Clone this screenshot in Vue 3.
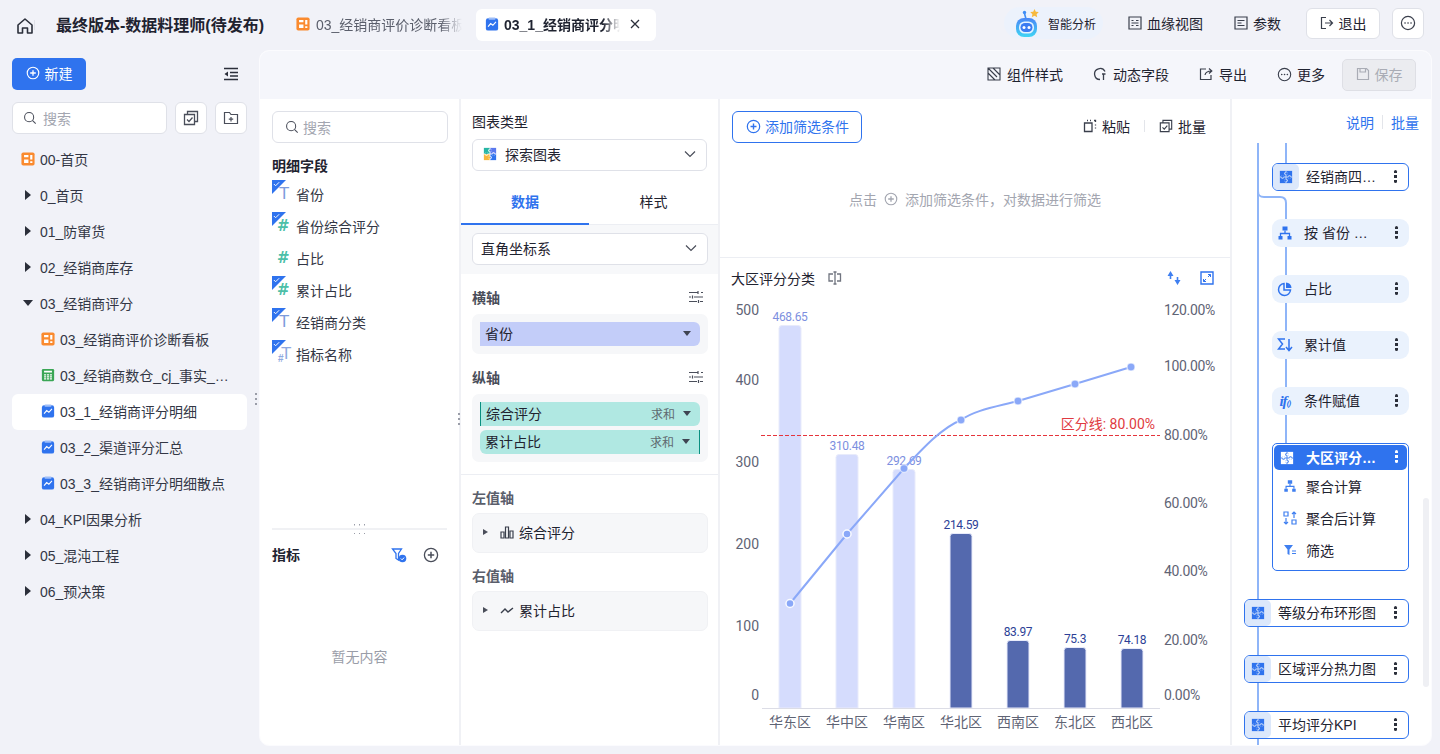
<template>
  <svg class="sprite" aria-hidden="true">
    <defs>
      <linearGradient id="robotGrad" x1="0" y1="0" x2="0" y2="1">
        <stop offset="0" stop-color="#4a86f6" />
        <stop offset="1" stop-color="#3fd5f4" />
      </linearGradient>
      <mask id="puzzleMask">
        <rect width="16" height="16" fill="#fff" />
        <path d="M8 1v14M1 8h14" stroke="#000" stroke-width="0.900" />
        <circle cx="8" cy="4" r="2" fill="#000" />
        <circle cx="12" cy="8" r="2" fill="#000" />
        <circle cx="8" cy="12" r="2" fill="#000" />
        <circle cx="4" cy="8" r="2" fill="#000" />
        <circle cx="8.700" cy="4" r="1.500" fill="#fff" />
        <circle cx="12" cy="8.700" r="1.500" fill="#fff" />
        <circle cx="7.300" cy="12" r="1.500" fill="#fff" />
        <circle cx="4" cy="7.300" r="1.500" fill="#fff" />
      </mask>
    </defs>
    <symbol id="puzzle" viewBox="0 0 16 16">
      <rect x="1" y="1" width="14" height="14" fill="currentColor" mask="url(#puzzleMask)" />
    </symbol>
    <symbol id="puzzleColor" viewBox="0 0 16 16">
      <g mask="url(#puzzleMask)">
        <rect x="1" y="1" width="7" height="7" fill="#26b5a4" />
        <rect x="8" y="1" width="7" height="7" fill="#5a78ee" />
        <rect x="1" y="8" width="7" height="7" fill="#f6b73c" />
        <rect x="8" y="8" width="7" height="7" fill="#2f73ee" />
      </g>
    </symbol>
    <symbol id="dash" viewBox="0 0 16 16">
      <rect x="0.500" y="0.500" width="15" height="15" rx="2" fill="#fa8a2e" />
      <path d="M3.500 3.500h5v2.500h-5z M10.500 3.500h2.500v5h-2.500z M3.500 8.500h5v4h-5z M10.500 10.500h2.500v2h-2.500z" fill="#fff" />
    </symbol>
    <symbol id="report" viewBox="0 0 16 16">
      <rect x="1" y="1.500" width="14" height="14" rx="2.500" fill="#2f73ee" />
      <rect x="4" y="0.500" width="8" height="2.500" rx="1" fill="#9dbdf8" />
      <path d="M3.500 11 6.500 7.500l2.500 2 3.500-4" fill="none" stroke="#fff" stroke-width="1.300" />
    </symbol>
    <symbol id="sheet" viewBox="0 0 16 16">
      <rect x="1" y="1" width="14" height="14" rx="1.500" fill="#3aa655" />
      <path d="M3.500 3h9v2.200h-9z M3.500 7h2.400v1.600H3.500z M6.800 7h2.400v1.600H6.800z M10.100 7h2.400v1.600h-2.400z M3.500 9.500h2.400v1.300H3.500z M6.800 9.500h2.400v1.300H6.800z M10.100 9.500h2.400v1.300h-2.400z M3.500 11.700h2.400v1.300H3.500z M6.800 11.700h2.400v1.300H6.800z M10.100 11.700h2.400v1.300h-2.400z" fill="#fff" />
    </symbol>
    <symbol id="agg" viewBox="0 0 16 16">
      <path d="M5.500 1.500h5v4h-5z M1.500 11h4v3.500h-4z M10.500 11h4v3.500h-4z" fill="currentColor" />
      <path d="M8 5.500V8.500M3.500 11V8.500h9V11" fill="none" stroke="currentColor" stroke-width="1.300" />
    </symbol>
    <symbol id="more" viewBox="0 0 16 16">
      <circle cx="8" cy="8" r="6.600" fill="none" stroke="currentColor" stroke-width="1.200" />
      <path d="M5 8h.1M8 8h.1M11 8h.1" stroke="currentColor" stroke-width="1.600" stroke-linecap="round" />
    </symbol>
    <symbol id="plus" viewBox="0 0 16 16">
      <circle cx="8" cy="8" r="6.600" fill="none" stroke="currentColor" stroke-width="1.300" />
      <path d="M8 4.800v6.400M4.800 8h6.400" stroke="currentColor" stroke-width="1.500" />
    </symbol>
    <symbol id="tune" viewBox="0 0 16 16">
      <path d="M1 3.500h9M13 3.500h2M1 8h2M6 8h9M1 12.500h8M12 12.500h3M10 2v3M4.500 6.500v3M10.500 11v3" fill="none" stroke="currentColor" stroke-width="1.200" />
    </symbol>
    <symbol id="search" viewBox="0 0 16 16">
      <circle cx="7" cy="7" r="5.200" fill="none" stroke="currentColor" stroke-width="1.200" />
      <path d="m11 11 3.500 3.500" stroke="currentColor" stroke-width="1.200" />
    </symbol>
    <symbol id="batch" viewBox="0 0 16 16">
      <path d="M1.500 4.500h10v10h-10z M4.500 4.500v-3h10v10h-3" fill="none" stroke="currentColor" stroke-width="1.300" />
      <path d="m4 9.500 2 2 3.500-4" fill="none" stroke="currentColor" stroke-width="1.300" />
    </symbol>
    <symbol id="chev" viewBox="0 0 12 12">
      <path d="m1 3.500 5 5 5-5" fill="none" stroke="currentColor" stroke-width="1.200" />
    </symbol>
  </svg>

  <div class="page">
    <header class="topbar">
      <svg class="home" viewBox="0 0 18 18"><path d="M2 8 9 2l7 6v8h-4.500v-5h-5v5H2z" fill="none" stroke="#2b2f3a" stroke-width="1.600" stroke-linejoin="round" /></svg>
      <i class="top-sep"></i>
      <h1 class="doc-title">最终版本-数据料理师(待发布)</h1>
      <div class="tab">
        <svg class="ic14"><use href="#dash" /></svg>
        <span class="tab-text">03_经销商评价诊断看板</span>
      </div>
      <div class="tab active">
        <svg class="ic14"><use href="#report" /></svg>
        <span class="tab-text">03_1_经销商评分明细</span>
        <svg class="tab-close" viewBox="0 0 10 10"><path d="m1 1 8 8M9 1 1 9" stroke="#2b2f3a" stroke-width="1.300" /></svg>
      </div>
      <div class="top-right">
        <div class="ai-pill">
          <svg class="robot" viewBox="0 0 28 28">
            <path d="M12 10 10.500 4.500" stroke="#3f8df5" stroke-width="1.600" />
            <circle cx="10.500" cy="3.500" r="1.700" fill="#3f8df5" />
            <path d="m20.500 0 1.300 2.700 3 .4-2.200 2.100.6 3-2.700-1.500-2.700 1.500.6-3-2.200-2.100 3-.4z" fill="#f7b93e" />
            <rect x="2" y="9" width="21" height="19" rx="8" fill="url(#robotGrad)" />
            <rect x="5" y="12.500" width="15" height="12" rx="5.500" fill="#e4f3ff" />
            <rect x="6.500" y="14" width="12" height="9" rx="4.500" fill="#3a7cf2" />
            <circle cx="10" cy="18.500" r="1.500" fill="#fff" />
            <circle cx="15" cy="18.500" r="1.500" fill="#fff" />
          </svg>
          <span>智能分析</span>
        </div>
        <div class="top-link lineage">
          <svg class="ic14" viewBox="0 0 14 14"><path d="M1 1h12v12H1z M3.500 4.500h2M3.500 9.500h2M8 4.500h2.500M8 9.500h2.500M3.500 7h7" fill="none" stroke="#3a3f4c" stroke-width="1.200" /></svg>
          <span>血缘视图</span>
        </div>
        <div class="top-link param">
          <svg class="ic14" viewBox="0 0 14 14"><path d="M1 1h12v12H1z M3.500 4.500h7M3.500 7h4M3.500 9.500h7" fill="none" stroke="#3a3f4c" stroke-width="1.200" /></svg>
          <span>参数</span>
        </div>
        <button class="exit-btn">
          <svg class="ic14" viewBox="0 0 14 14"><path d="M6 1.500H1.500v11H6 M5 7h7.500M9.500 4l3 3-3 3" fill="none" stroke="#3a3f4c" stroke-width="1.200" /></svg>
          退出
        </button>
        <button class="more-btn"><svg class="ic16 dark"><use href="#more" /></svg></button>
      </div>
    </header>

    <div class="body">
      <aside class="sidebar">
        <div class="side-top">
          <button class="new-btn"><svg class="ic14"><use href="#plus" /></svg>新建</button>
          <svg class="collapse" viewBox="0 0 16 14"><path d="M1 1.500h14M7 5.500h8M7 9h8M1 12.500h14" stroke="#2b2f3a" stroke-width="1.500" /><path d="M5 4.500 1.500 7 5 9.500z" fill="#2b2f3a" /></svg>
        </div>
        <div class="side-search">
          <div class="search-box"><svg class="ic14"><use href="#search" /></svg>搜索</div>
          <button class="square-btn"><svg class="ic16"><use href="#batch" /></svg></button>
          <button class="square-btn">
            <svg class="ic16" viewBox="0 0 16 16"><path d="M1.500 2.500h5l1.500 2h6.500v9h-13z M8 7v4.500M5.800 9.200h4.400" fill="none" stroke="currentColor" stroke-width="1.200" /></svg>
          </button>
        </div>
        <ul class="tree">
          <li v-for="row in treeRows" :key="row.label" class="tree-row" :class="{ child: row.child, current: row.current }">
            <i v-if="row.arrow" class="arrow" :class="row.arrow"></i>
            <svg v-if="row.icon" class="ic14 tree-ic"><use :href="'#' + row.icon" /></svg>
            <span class="tree-label">{{ row.label }}</span>
          </li>
        </ul>
        <span class="grip side-grip"></span>
      </aside>

      <main class="card">
        <div class="toolbar">
          <div class="tool">
            <svg class="ic14" viewBox="0 0 14 14"><path d="M1 1h12v12H1z M1 1l9 9M6 1l7 7M1 6l7 7" fill="none" stroke="#3a3f4c" stroke-width="1.100" /></svg>
            <span>组件样式</span>
          </div>
          <div class="tool">
            <svg class="ic14" viewBox="0 0 14 14"><path d="M12 4.500A5.500 5.500 0 1 0 7 12.500 M9 7h3.500M10.500 7v6" fill="none" stroke="#3a3f4c" stroke-width="1.300" /></svg>
            <span>动态字段</span>
          </div>
          <div class="tool">
            <svg class="ic14" viewBox="0 0 14 14"><path d="M7 2H1.500v10.500h10.500V8 M6 8c.5-3 3-4 6.500-4M10 1.500 12.800 4 10 6.500" fill="none" stroke="#3a3f4c" stroke-width="1.200" /></svg>
            <span>导出</span>
          </div>
          <div class="tool more-tool">
            <svg class="ic15 dark"><use href="#more" /></svg>
            <span>更多</span>
          </div>
          <button class="save-btn">
            <svg class="ic14" viewBox="0 0 14 14"><path d="M1.500 1.500h9l2 2v9h-11z M4 1.500v3.500h5.500v-3.500" fill="none" stroke="#a9acb5" stroke-width="1.200" /></svg>
            保存
          </button>
        </div>

        <div class="panels">
          <section class="fields">
            <div class="search-box wide"><svg class="ic14"><use href="#search" /></svg>搜索</div>
            <div class="group-title">明细字段</div>
            <ul class="field-list">
              <li v-for="f in fieldRows" :key="f.label" class="field-row">
                <span class="field-ic">
                  <i v-if="f.checked" class="corner"></i>
                  <svg v-if="f.checked" class="tick" viewBox="0 0 8 6"><path d="m1 3 2 2 4-4" fill="none" stroke="#fff" stroke-width="1.100" /></svg>
                  <span class="glyph" :class="f.type">{{ f.type === 'num' ? '#' : 'T' }}</span>
                  <span v-if="f.type === 'mix'" class="glyph-small">#</span>
                </span>
                <span class="field-name">{{ f.label }}</span>
              </li>
            </ul>
            <div class="measure">
              <div class="measure-line"><span class="h-grip"></span></div>
              <div class="measure-head">
                <span class="group-title flat">指标</span>
                <svg class="ic16 m-filter" viewBox="0 0 16 16">
                  <path d="M1.500 2h9L7.500 6.500V13L5 11.500v-5z" fill="none" stroke="#2f73ee" stroke-width="1.300" />
                  <circle cx="11.500" cy="11.500" r="3.800" fill="#2f73ee" />
                  <path d="m9.800 11.500 1.300 1.300 2-2.200" fill="none" stroke="#fff" stroke-width="1" />
                </svg>
                <svg class="ic16 m-plus"><use href="#plus" /></svg>
              </div>
              <div class="empty">暂无内容</div>
            </div>
          </section>

          <section class="config">
            <div class="cfg-label first">图表类型</div>
            <div class="select type-select">
              <svg class="ic14"><use href="#puzzleColor" /></svg>
              <span>探索图表</span>
              <svg class="chev"><use href="#chev" /></svg>
            </div>
            <div class="cfg-tabs">
              <span class="cfg-tab on">数据</span>
              <span class="cfg-tab">样式</span>
            </div>
            <div class="coord-band">
              <div class="select coord-select">
                <span>直角坐标系</span>
                <svg class="chev"><use href="#chev" /></svg>
              </div>
            </div>
            <div class="axis-head"><span>横轴</span><svg class="ic16"><use href="#tune" /></svg></div>
            <div class="well">
              <div class="pill dim"><span>省份</span><i class="caret"></i></div>
            </div>
            <div class="axis-head"><span>纵轴</span><svg class="ic16"><use href="#tune" /></svg></div>
            <div class="well stack">
              <div class="pill val left-edge"><span>综合评分</span><em>求和</em><i class="caret"></i></div>
              <div class="pill val right-edge"><span>累计占比</span><em>求和</em><i class="caret"></i></div>
            </div>
            <div class="cfg-rule"></div>
            <div class="value-title">左值轴</div>
            <div class="value-box">
              <i class="mini-arrow"></i>
              <svg class="ic14" viewBox="0 0 14 14"><path d="M1 7h3v6H1z M5.500 2h3v11h-3z M10 6h3v7h-3z" fill="none" stroke="#3a3f4c" stroke-width="1.200" /></svg>
              <span>综合评分</span>
            </div>
            <div class="value-title second">右值轴</div>
            <div class="value-box">
              <i class="mini-arrow"></i>
              <svg class="ic14" viewBox="0 0 14 14"><path d="m1 10 4-4 3 3 5-4" fill="none" stroke="#3a3f4c" stroke-width="1.400" /></svg>
              <span>累计占比</span>
            </div>
            <span class="grip cfg-grip"></span>
          </section>

          <section class="chart-col">
            <div class="filter-area">
              <div class="filter-head">
                <button class="add-filter"><svg class="ic15"><use href="#plus" /></svg>添加筛选条件</button>
                <div class="filter-actions">
                  <span class="fa-item">
                    <svg class="ic14" viewBox="0 0 14 14"><path d="M1.500 4h7.500v8.500H1.500z M4 1.500h1M7 1.500h1M11 1.500h1.500V3M12.500 5.500v1M12.500 8.500v1" fill="none" stroke="#3a3f4c" stroke-width="1.300" /></svg>
                    粘贴
                  </span>
                  <i class="fa-sep"></i>
                  <span class="fa-item"><svg class="ic14"><use href="#batch" /></svg>批量</span>
                </div>
              </div>
              <div class="filter-hint">
                点击
                <svg class="ic14"><use href="#plus" /></svg>
                添加筛选条件，对数据进行筛选
              </div>
            </div>
            <div class="chart-head">
              <span>大区评分分类</span>
              <svg class="ic14 rename" viewBox="0 0 14 14"><path d="M5 3H1v7h4M9 3h3.500v7H9 M7 1v12M5.500 1h3M5.500 13h3" fill="none" stroke="#70747f" stroke-width="1.300" /></svg>
              <svg class="ic16 swap" viewBox="0 0 16 16"><path d="M4.500 1 1.500 6h2.200v3h1.600V6h2.200zM11.500 15l3-5h-2.200V7h-1.600v3H8.500z" fill="#3f7ff0" /></svg>
              <svg class="ic14 expand" viewBox="0 0 14 14"><path d="M1 1h12v12H1z" fill="none" stroke="#2f73ee" stroke-width="1.400" /><path d="M8 3.500h2.500V6M10.500 3.500 8 6M6 10.500H3.500V8M3.500 10.500 6 8" fill="none" stroke="#2f73ee" stroke-width="1" /></svg>
            </div>
            <svg class="chart" viewBox="720 290 511 456">
              <g v-for="t in leftTicks" :key="t.label">
                <text class="tick-text" x="759" :y="t.y + 5" text-anchor="end">{{ t.label }}</text>
              </g>
              <g v-for="t in rightTicks" :key="t.label">
                <text class="tick-text pct" x="1164" :y="t.y + 5">{{ t.label }}</text>
              </g>
              <g v-for="b in bars" :key="b.name">
                <path :d="barPath(b)" :fill="b.light ? '#d5dcfd' : '#5469ae'" stroke="#e8ebfb" stroke-width="1" />
                <text class="bar-value" :class="{ light: b.light }" :x="b.x" :y="b.top - 5" text-anchor="middle">{{ b.value }}</text>
                <text class="tick-text" :x="b.x" y="727" text-anchor="middle">{{ b.name }}</text>
              </g>
              <path d="M762 708.500h398" stroke="#dcdde6" stroke-width="1" />
              <path d="M761 435.500h399" stroke="#e5343c" stroke-width="1" stroke-dasharray="4 2" />
              <text class="cut-label" x="1155" y="429" text-anchor="end">区分线: 80.00%</text>
              <path :d="linePath" fill="none" stroke="#8aa8f8" stroke-width="2" />
              <circle v-for="(p, i) in linePoints" :key="i" :cx="p[0]" :cy="p[1]" r="4" fill="#8aa8f8" stroke="#fff" :stroke-opacity="i < 2 ? 0.9 : 0.6" stroke-width="1.500" />
            </svg>
          </section>

          <section class="flow-col">
            <div class="flow-head">
              <span>说明</span><i></i><span>批量</span>
            </div>
            <div class="flow">
              <svg class="flow-lines" viewBox="0 0 200 603">
                <path d="M26 0V603" fill="none" stroke="#8fb5f8" stroke-width="2" />
                <path d="M54 0V24M26 48c0 5 2 6 6 6h16c4 0 6 2 6 6V320" fill="none" stroke="#8fb5f8" stroke-width="2" />
              </svg>
              <div class="node outlined inner">
                <span class="node-ic boxed"><svg class="ic14"><use href="#puzzle" /></svg></span>
                <span class="node-text">经销商四…</span>
                <i class="dots"></i>
              </div>
              <div v-for="s in steps" :key="s.label" class="node soft inner">
                <span class="node-ic">
                  <svg v-if="s.icon === 'agg'" class="ic16"><use href="#agg" /></svg>
                  <svg v-else-if="s.icon === 'pie'" class="ic16" viewBox="0 0 16 16"><path d="M7 2.500a6 6 0 1 0 6.500 6.500H7z" fill="none" stroke="currentColor" stroke-width="1.500" /><path d="M9 1.500A5.500 5.500 0 0 1 14.500 7H9z" fill="currentColor" /></svg>
                  <svg v-else-if="s.icon === 'sum'" class="ic16" viewBox="0 0 16 16"><path d="M8 2H1.500l4 5-4 5H8M12 2v11M9 10l3 3.500 3-3.500" fill="none" stroke="currentColor" stroke-width="1.500" /></svg>
                  <em v-else class="if-mark">if<small>()</small></em>
                </span>
                <span class="node-text">{{ s.label }}</span>
                <i class="dots"></i>
              </div>
              <div class="node-group">
                <div class="node-current">
                  <span class="node-ic"><svg class="ic14"><use href="#puzzle" /></svg></span>
                  <span class="node-text">大区评分…</span>
                  <i class="dots"></i>
                </div>
                <div class="sub-row">
                  <svg class="ic14"><use href="#agg" /></svg>聚合计算
                </div>
                <div class="sub-row">
                  <svg class="ic14" viewBox="0 0 14 14"><path d="M1 1h4v4H1z M9 9h4v4H9z M3 7v6M1 11l2 2 2-2M11 7V1M9 3l2-2 2 2" fill="none" stroke="currentColor" stroke-width="1.200" /></svg>聚合后计算
                </div>
                <div class="sub-row">
                  <svg class="ic14" viewBox="0 0 14 14"><path d="M1 2h9L6.500 6.500V12L4.500 11V6.500z" fill="currentColor" /><path d="M9 8h4M9 10.500h4" stroke="currentColor" stroke-width="1.100" /></svg>筛选
                </div>
              </div>
              <div v-for="(t, i) in charts" :key="t" class="node outlined outer" :class="{ tight: i === 0 }">
                <span class="node-ic boxed"><svg class="ic14"><use href="#puzzle" /></svg></span>
                <span class="node-text">{{ t }}</span>
                <i class="dots"></i>
              </div>
              <span class="flow-scroll"></span>
            </div>
          </section>
        </div>
      </main>
    </div>
  </div>
</template>

<script setup>
import { computed } from 'vue'

const treeRows = [
  { label: '00-首页', icon: 'dash' },
  { label: '0_首页', arrow: 'right' },
  { label: '01_防窜货', arrow: 'right' },
  { label: '02_经销商库存', arrow: 'right' },
  { label: '03_经销商评分', arrow: 'down' },
  { label: '03_经销商评价诊断看板', icon: 'dash', child: true },
  { label: '03_经销商数仓_cj_事实_…', icon: 'sheet', child: true },
  { label: '03_1_经销商评分明细', icon: 'report', child: true, current: true },
  { label: '03_2_渠道评分汇总', icon: 'report', child: true },
  { label: '03_3_经销商评分明细散点', icon: 'report', child: true },
  { label: '04_KPI因果分析', arrow: 'right' },
  { label: '05_混沌工程', arrow: 'right' },
  { label: '06_预决策', arrow: 'right' }
]

const fieldRows = [
  { label: '省份', type: 'text', checked: true },
  { label: '省份综合评分', type: 'num', checked: true },
  { label: '占比', type: 'num', checked: false },
  { label: '累计占比', type: 'num', checked: true },
  { label: '经销商分类', type: 'text', checked: true },
  { label: '指标名称', type: 'mix', checked: true }
]

const steps = [
  { label: '按 省份 …', icon: 'agg' },
  { label: '占比', icon: 'pie' },
  { label: '累计值', icon: 'sum' },
  { label: '条件赋值', icon: 'if' }
]

const charts = ['等级分布环形图', '区域评分热力图', '平均评分KPI']

const leftTicks = [
  { label: '500', y: 310 },
  { label: '400', y: 380 },
  { label: '300', y: 462 },
  { label: '200', y: 544 },
  { label: '100', y: 626 },
  { label: '0', y: 695 }
]

const rightTicks = [
  { label: '120.00%', y: 310 },
  { label: '100.00%', y: 366 },
  { label: '80.00%', y: 435 },
  { label: '60.00%', y: 503 },
  { label: '40.00%', y: 571 },
  { label: '20.00%', y: 640 },
  { label: '0.00%', y: 695 }
]

const bars = [
  { name: '华东区', value: '468.65', x: 790, top: 325.5, light: true },
  { name: '华中区', value: '310.48', x: 847, top: 454.5, light: true },
  { name: '华南区', value: '292.69', x: 904, top: 469.5, light: true },
  { name: '华北区', value: '214.59', x: 961, top: 533.5, light: false },
  { name: '西南区', value: '83.97', x: 1018, top: 640.5, light: false },
  { name: '东北区', value: '75.3', x: 1075, top: 647.5, light: false },
  { name: '西北区', value: '74.18', x: 1132, top: 648.5, light: false }
]

const barPath = (b) => {
  const l = b.x - 11
  const r = b.x + 11
  return `M${l} 708V${b.top + 3}q0-3 3-3H${r - 3}q3 0 3 3V708z`
}

const linePoints = [
  [790, 603.5],
  [847, 534],
  [904, 468.5],
  [961, 420],
  [1018, 401],
  [1075, 384],
  [1131, 367]
]

const linePath = computed(() => {
  const [a, b, c, d, e, f, g] = linePoints
  return `M${a}L${b}L${c}C925 446 942 428 ${d}C975 410 995 407 ${e}L${f}L${g}`
})
</script>

<style>
html,
body {
  margin: 0;
  background: #f1f2f8;
}
</style>

<style scoped>
* {
  box-sizing: border-box;
}

.sprite {
  position: absolute;
  width: 0;
  height: 0;
}

.page {
  width: 1440px;
  height: 754px;
  overflow: hidden;
  background: #f1f2f8;
  color: #1f2330;
  font-family: "Liberation Sans", "Noto Sans CJK SC", sans-serif;
  font-size: 14px;
}

button {
  font-family: inherit;
  font-size: 14px;
  cursor: pointer;
}

ul {
  list-style: none;
  margin: 0;
  padding: 0;
}

.ic14 {
  width: 14px;
  height: 14px;
  flex: none;
}

.ic15 {
  width: 15px;
  height: 15px;
  flex: none;
}

.ic16 {
  width: 16px;
  height: 16px;
  flex: none;
}

.dark {
  color: #3a3f4c;
}

/* top bar */
.topbar {
  height: 50px;
  display: flex;
  align-items: center;
  padding-left: 16px;
  position: relative;
}

.home {
  width: 18px;
  height: 18px;
  margin-top: 2px;
}

.top-sep {
  width: 1px;
  height: 10px;
  margin: 0 21px 0 0;
  background: #dfe1e8;
}

.doc-title {
  margin: 0 32px 2px 0;
  font-size: 16px;
  font-weight: 600;
  width: 208px;
  white-space: nowrap;
}

.tab {
  display: flex;
  align-items: center;
  gap: 6px;
  width: 180px;
  height: 32px;
  padding-bottom: 2px;
  color: #5a5e6b;
  white-space: nowrap;
}

.tab-text {
  width: 146px;
  overflow: hidden;
  -webkit-mask-image: linear-gradient(90deg, #000 85%, transparent);
  mask-image: linear-gradient(90deg, #000 85%, transparent);
}

.tab.active {
  gap: 5px;
  background: #fff;
  border-radius: 6px;
  padding-left: 9px;
  color: #1f2330;
  font-weight: 600;
}

.tab.active .tab-text {
  width: 116px;
}

.tab-close {
  width: 10px;
  height: 10px;
  margin-left: 5px;
}

.top-right {
  position: absolute;
  right: 16px;
  top: 7px;
  display: flex;
  align-items: center;
  height: 32px;
}

.ai-pill {
  display: flex;
  align-items: center;
  gap: 6px;
  width: 99px;
  height: 32px;
  padding-left: 10px;
  border-radius: 16px;
  background: #ecf2fc;
  font-size: 12px;
}

.robot {
  width: 28px;
  height: 28px;
}

.top-link {
  display: flex;
  align-items: center;
  gap: 5px;
}

.lineage {
  margin-left: 25px;
}

.param {
  margin-left: 31px;
}

.exit-btn {
  display: flex;
  align-items: center;
  justify-content: center;
  gap: 5px;
  width: 74px;
  height: 31px;
  margin-left: 25px;
  background: #fff;
  border: 1px solid #dfe1e8;
  border-radius: 6px;
  color: #1f2330;
}

.more-btn {
  display: flex;
  align-items: center;
  justify-content: center;
  width: 32px;
  height: 31px;
  margin-left: 12px;
  padding: 0;
  background: #fff;
  border: 1px solid #dfe1e8;
  border-radius: 6px;
}

.body {
  display: flex;
  height: 696px;
}

/* left tree */
.sidebar {
  width: 259px;
  flex: none;
  padding: 8px 12px 0;
  position: relative;
}

.side-top {
  display: flex;
  align-items: center;
  justify-content: space-between;
  height: 32px;
}

.new-btn {
  display: flex;
  align-items: center;
  justify-content: center;
  gap: 5px;
  width: 74px;
  height: 32px;
  padding: 0 0 2px;
  background: #2f73ee;
  color: #fff;
  border: none;
  border-radius: 5px;
}

.collapse {
  width: 16px;
  height: 14px;
  margin-right: 8px;
}

.side-search {
  display: flex;
  gap: 8px;
  margin-top: 12px;
}

.search-box {
  display: flex;
  align-items: center;
  gap: 6px;
  width: 155px;
  height: 32px;
  padding-left: 10px;
  background: #fff;
  border: 1px solid #dfe1e8;
  border-radius: 6px;
  color: #a3a6b0;
}

.search-box svg {
  color: #4a4e5a;
}

.search-box.wide {
  width: 176px;
  padding-left: 12px;
  gap: 4px;
}

.square-btn {
  display: flex;
  align-items: center;
  justify-content: center;
  width: 32px;
  height: 32px;
  padding: 0;
  background: #fff;
  border: 1px solid #dfe1e8;
  border-radius: 6px;
  color: #4a4e5a;
}

.tree {
  margin-top: 8px;
}

.tree-row {
  display: flex;
  align-items: center;
  height: 36px;
  padding: 0 0 2px 9px;
  white-space: nowrap;
  color: #333745;
  border-radius: 6px;
}

.tree-row.child {
  padding-left: 29px;
}

.tree-row.current {
  background: #fff;
}

.tree-ic {
  margin-right: 5px;
}

.arrow {
  width: 0;
  height: 0;
  border-style: solid;
}

.arrow.right {
  margin-left: 4px;
  margin-right: 9px;
  border-width: 5px 0 5px 6px;
  border-color: transparent transparent transparent #2b2f3a;
}

.arrow.down {
  margin-left: 2px;
  margin-right: 7px;
  border-width: 6px 5px 0;
  border-color: #2b2f3a transparent transparent;
}

.grip {
  position: absolute;
  width: 2px;
  height: 14px;
  background: repeating-linear-gradient(#9a9da8 0 2px, transparent 2px 5px);
}

.side-grip {
  left: 255px;
  top: 343px;
}

/* card */
.card {
  width: 1173px;
  height: 696px;
  flex: none;
  background: #fff;
  border: 1px solid #fbfbfe;
  border-radius: 10px;
  overflow: hidden;
  display: flex;
  flex-direction: column;
}

.toolbar {
  height: 48px;
  flex: none;
  display: flex;
  align-items: center;
  justify-content: flex-end;
  gap: 30px;
  padding-right: 15px;
  background: #f5f6fb;
}

.tool {
  display: flex;
  align-items: center;
  gap: 6px;
  padding-bottom: 2px;
  color: #1f2330;
}

.more-tool {
  gap: 5px;
}

.save-btn {
  display: flex;
  align-items: center;
  justify-content: center;
  gap: 5px;
  width: 74px;
  height: 32px;
  margin-left: -13px;
  padding: 0 0 2px;
  background: #ebecf0;
  border: 1px solid #dedfe5;
  border-radius: 5px;
  color: #a9acb5;
}

.panels {
  flex: 1;
  display: flex;
  min-height: 0;
}

/* field column */
.fields {
  width: 201px;
  flex: none;
  padding: 12px 12px 0;
  border-right: 2px solid #f0f1f5;
  display: flex;
  flex-direction: column;
}

.group-title {
  margin-top: 13px;
  line-height: 20px;
  font-weight: 600;
}

.group-title.flat {
  margin: 0;
  flex: 1;
}

.field-list {
  margin-top: 2px;
}

.field-row {
  display: flex;
  align-items: center;
  height: 32px;
  gap: 6px;
  color: #333745;
}

.field-ic {
  position: relative;
  width: 18px;
  height: 32px;
  flex: none;
}

.corner {
  position: absolute;
  left: 0;
  top: 2px;
  width: 14px;
  height: 14px;
  background: #2f73ee;
  clip-path: polygon(0 0, 100% 0, 0 100%);
}

.tick {
  position: absolute;
  left: 1px;
  top: 3px;
  width: 7px;
  height: 6px;
}

.glyph {
  position: absolute;
  left: 7px;
  top: 6px;
  font-size: 17px;
  line-height: 20px;
}

.glyph.text {
  color: #7d9bdc;
}

.glyph.num {
  left: 5px;
  font-family: "DejaVu Sans", sans-serif;
  font-size: 15px;
  color: #4dbfa8;
  font-weight: 700;
}

.glyph.mix {
  left: 9px;
  color: #8fa9e0;
}

.glyph-small {
  position: absolute;
  left: 6px;
  top: 15px;
  font-size: 10px;
  line-height: 12px;
  font-weight: 700;
  color: #8fa9e0;
}

.measure {
  margin-top: 158px;
  flex: 1;
  display: flex;
  flex-direction: column;
}

.measure-line {
  position: relative;
  height: 2px;
  background: #f0f1f4;
}

.h-grip {
  position: absolute;
  left: 82px;
  top: -4px;
  width: 14px;
  height: 10px;
  background:
    repeating-linear-gradient(90deg, #9a9da8 0 1.500px, transparent 1.500px 5px) top / 100% 1.500px no-repeat,
    repeating-linear-gradient(90deg, #9a9da8 0 1.500px, transparent 1.500px 5px) bottom / 100% 1.500px no-repeat;
}

.measure-head {
  display: flex;
  align-items: center;
  gap: 16px;
  height: 20px;
  margin-top: 15px;
  padding-right: 8px;
}

.m-plus {
  color: #4a4e5a;
}

.empty {
  margin-top: 82px;
  text-align: center;
  color: #9a9da8;
  line-height: 20px;
}

/* config column */
.config {
  width: 259px;
  flex: none;
  border-right: 2px solid #f0f1f5;
  position: relative;
}

.cfg-label.first {
  margin: 13px 11px 7px;
  line-height: 20px;
}

.select {
  display: flex;
  align-items: center;
  height: 32px;
  padding-bottom: 2px;
  background: #fff;
  border: 1px solid #dfe1e8;
  border-radius: 6px;
}

.type-select {
  margin: 0 11px;
  padding: 0 10px 2px;
  gap: 8px;
}

.chev {
  width: 12px;
  height: 12px;
  margin-left: auto;
  color: #4a4e5a;
}

.cfg-tabs {
  display: flex;
  height: 39px;
  margin-top: 15px;
}

.cfg-tab {
  flex: 1;
  text-align: center;
  line-height: 32px;
  border-bottom: 1px solid #eceef3;
}

.cfg-tab.on {
  flex: none;
  width: 128px;
  color: #2f73ee;
  font-weight: 600;
  border-bottom: 2px solid #2f73ee;
}

.coord-band {
  height: 49px;
  padding: 8px 10px 0 11px;
  background: #f7f8fa;
}

.coord-select {
  padding: 0 10px 2px 8px;
}

.axis-head {
  display: flex;
  align-items: center;
  justify-content: space-between;
  height: 20px;
  padding-bottom: 2px;
  margin: 14px 14px 6px 11px;
  color: #4a4e5a;
  font-weight: 600;
}

.axis-head svg {
  color: #4a4e5a;
}

.well {
  margin: 0 10px 0 11px;
  padding: 8px;
  background: #f6f7f9;
  border-radius: 7px;
}

.well.stack {
  display: flex;
  flex-direction: column;
  gap: 4px;
}

.pill {
  display: flex;
  align-items: center;
  height: 24px;
  padding: 0 8px 2px 5px;
  border-radius: 6px;
}

.pill.dim {
  background: #c3cdf9;
  border-radius: 0 6px 6px 0;
  justify-content: space-between;
}

.pill.val {
  background: #b0e8e2;
}

.pill.val span {
  flex: 1;
}

.pill.val em {
  font-style: normal;
  font-size: 12px;
  color: #5f6a70;
  margin-right: 8px;
}

.left-edge {
  border-left: 1px solid #0a8f80;
  border-radius: 0 6px 6px 0;
}

.right-edge {
  border-right: 1px solid #0a8f80;
  border-radius: 6px 0 0 6px;
}

.caret {
  width: 0;
  height: 0;
  margin-right: 1px;
  border-style: solid;
  border-width: 5px 4px 0;
  border-color: #3f4452 transparent transparent;
}

.cfg-rule {
  height: 1px;
  margin-top: 12px;
  background: #eceef3;
}

.value-title {
  margin: 13px 11px 5px;
  line-height: 20px;
  color: #5a5e6b;
  font-weight: 600;
}

.value-title.second {
  margin-top: 13px;
}

.value-box {
  display: flex;
  align-items: center;
  gap: 5px;
  height: 40px;
  margin: 0 10px 0 11px;
  padding: 0 0 2px 10px;
  background: #f6f7f9;
  border: 1px solid #f0f1f4;
  border-radius: 7px;
}

.mini-arrow {
  width: 0;
  height: 0;
  margin-right: 7px;
  border-style: solid;
  border-width: 3.500px 0 3.500px 5px;
  border-color: transparent transparent transparent #4a4e5a;
}

.cfg-grip {
  left: -3px;
  top: 314px;
}

/* chart column */
.chart-col {
  width: 512px;
  flex: none;
  border-right: 2px solid #f0f1f5;
  display: flex;
  flex-direction: column;
}

.filter-area {
  height: 159px;
  flex: none;
  padding: 12px 12px 0;
  border-bottom: 1px solid #eceef3;
}

.filter-head {
  display: flex;
  align-items: center;
  justify-content: space-between;
}

.add-filter {
  display: flex;
  align-items: center;
  gap: 4px;
  width: 130px;
  height: 32px;
  padding: 0 0 2px 13px;
  background: #fff;
  border: 1px solid #2f73ee;
  border-radius: 6px;
  color: #2f73ee;
}

.filter-actions {
  display: flex;
  align-items: center;
  gap: 14px;
  padding: 0 12px 2px 0;
}

.fa-item {
  display: flex;
  align-items: center;
  gap: 5px;
}

.fa-item svg {
  color: #3a3f4c;
}

.fa-sep {
  width: 1px;
  height: 12px;
  background: #e3e5ea;
}

.filter-hint {
  display: flex;
  align-items: center;
  justify-content: center;
  gap: 7px;
  margin-top: 46px;
  height: 20px;
  color: #a3a6b0;
}

.filter-hint svg {
  color: #a3a6b0;
}

.chart-head {
  display: flex;
  align-items: center;
  height: 32px;
  padding: 7px 16px 0 11px;
  flex: none;
}

.rename {
  margin-left: 13px;
}

.swap {
  margin-left: auto;
}

.expand {
  margin-left: 18px;
}

.chart {
  display: block;
  width: 511px;
  height: 456px;
  flex: none;
  font-family: Roboto, "Noto Sans CJK SC", sans-serif;
}

.tick-text {
  font-size: 14px;
  fill: #5f6475;
}

.tick-text.pct {
  letter-spacing: -0.35px;
}

.bar-value {
  font-size: 12px;
  letter-spacing: -0.3px;
  fill: #2c3f96;
}

.bar-value.light {
  fill: #7d8fe0;
}

.cut-label {
  font-size: 14px;
  fill: #e03a41;
}

/* flow column */
.flow-col {
  flex: 1;
  min-width: 0;
  position: relative;
}

.flow-head {
  display: flex;
  align-items: center;
  justify-content: flex-end;
  gap: 8px;
  height: 44px;
  padding: 2px 12px 0 0;
  color: #2f73ee;
}

.flow-head i {
  width: 1px;
  height: 14px;
  background: #e3e5ea;
}

.flow {
  position: relative;
  height: 603px;
  padding-top: 20px;
  overflow: hidden;
}

.flow-lines {
  position: absolute;
  left: 0;
  top: 0;
  width: 200px;
  height: 603px;
}

.node {
  position: relative;
  display: flex;
  align-items: center;
  height: 28px;
  margin-bottom: 28px;
  color: #1f2330;
  white-space: nowrap;
}

.node.inner {
  margin-left: 40px;
  width: 137px;
}

.node.outer {
  margin-left: 12px;
  width: 165px;
}

.node.outer.tight {
  margin-top: 28px;
}

.node.outlined {
  background: #fff;
  border: 1px solid #2f73ee;
  border-radius: 6px;
}

.node.soft {
  background: #eaf2fd;
  border-radius: 9px;
}

.node.soft .node-text {
  padding-left: 6px;
}

.node-ic {
  display: flex;
  align-items: center;
  justify-content: center;
  width: 26px;
  height: 26px;
  flex: none;
  color: #2f73ee;
}

.node-ic.boxed {
  background: #dce8fb;
  border-radius: 5px;
}

.node-text {
  flex: 1;
  padding: 0 0 2px 7px;
  min-width: 0;
  overflow: hidden;
}

.if-mark {
  font-family: "Liberation Serif", serif;
  font-size: 15px;
  font-weight: 700;
  letter-spacing: -1px;
}

.if-mark small {
  font-size: 9px;
}

.dots {
  width: 3px;
  height: 13px;
  margin: 0 11px 2px 0;
  flex: none;
  background: repeating-linear-gradient(#2b2f3a 0 3px, transparent 3px 5px);
  border-radius: 2px;
}

.node-group {
  position: relative;
  width: 137px;
  height: 128px;
  margin-left: 40px;
  padding: 1px;
  background: #fff;
  border: 1px solid #2f73ee;
  border-radius: 5px;
}

.node-current {
  display: flex;
  align-items: center;
  height: 25px;
  background: #2f73ee;
  border-radius: 5px;
  color: #fff;
  font-weight: 600;
}

.node-current .node-ic {
  color: #fff;
  height: 24px;
}

.node-current .node-text {
  padding-left: 6px;
}

.node-current .dots {
  background: repeating-linear-gradient(#fff 0 3px, transparent 3px 5px);
  margin-right: 9px;
}

.sub-row {
  display: flex;
  align-items: center;
  gap: 9px;
  height: 32px;
  padding-left: 9px;
  color: #1f2330;
}

.sub-row svg {
  color: #3f7ff0;
}

.flow-scroll {
  position: absolute;
  left: 191px;
  top: 355px;
  width: 6px;
  height: 189px;
  border-radius: 3px;
  background: #eff0f4;
}
</style>
